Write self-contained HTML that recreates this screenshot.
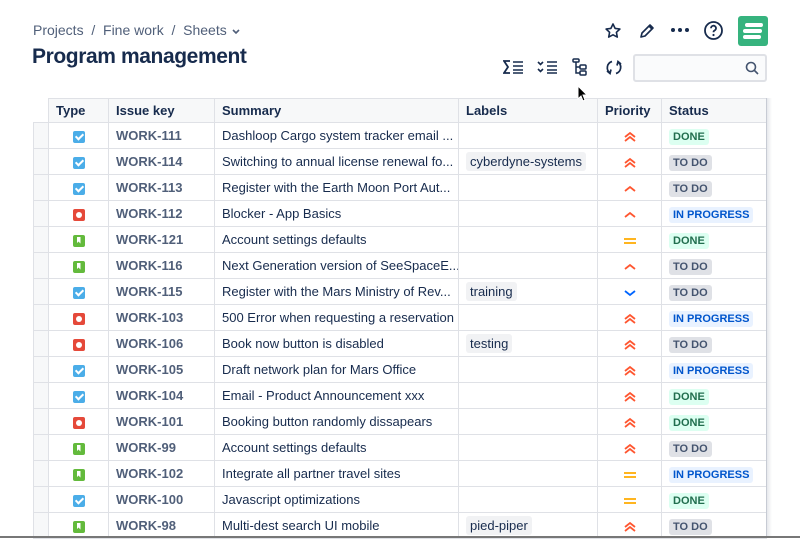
<!DOCTYPE html>
<html><head><meta charset="utf-8"><style>
*{box-sizing:border-box;margin:0;padding:0}
body{width:800px;height:538px;overflow:hidden;background:#fff;font-family:"Liberation Sans",sans-serif;color:#172b4d;position:relative}
.a{position:absolute}
.bc{left:33px;top:22px;font-size:14px;color:#505f79}
.h1{left:32px;top:45px;font-size:21px;font-weight:bold;color:#172b4d;letter-spacing:-0.4px}
table{position:absolute;left:33px;top:98px;border-collapse:collapse;font-size:13px;table-layout:fixed;width:733px}
td,th{border:1px solid #dfe1e6;height:26px;padding:0 7px;white-space:nowrap;overflow:hidden}
th{text-align:left;font-weight:bold;background:#f7f8f9;height:24px;color:#172b4d}
td.h{background:#f7f8f9;padding:0}
th.h{background:#fff;border:none;border-bottom:1px solid #dfe1e6;padding:0}
td.k{color:#505f79;font-weight:bold}
td.c{text-align:center}
.ic{display:inline-block;width:12px;height:12px;border-radius:2px;vertical-align:middle;position:relative}
.t{background:#4bade8}.t:after{content:"";position:absolute;left:4px;top:1px;width:3px;height:6px;border:solid #fff;border-width:0 2px 2px 0;transform:rotate(45deg)}
.b{background:#e5493a}.b:after{content:"";position:absolute;left:3px;top:3px;width:6px;height:6px;border-radius:50%;background:#fff}
.s{background:#63ba3c}.s:after{content:"";position:absolute;left:4px;top:2px;width:4px;height:7px;background:#fff;clip-path:polygon(0 0,100% 0,100% 100%,50% 70%,0 100%)}
.lz{background:#f1f2f4;border-radius:3px;padding:2px 4px;color:#172b4d}
.st{font-size:11px;font-weight:bold;padding:2px 4px;border-radius:3px}
.dn{background:#dcfff1;color:#216e4e}.td{background:#dfe1e6;color:#44546f}.ip{background:#e9f2ff;color:#0055cc}
svg{vertical-align:middle}
</style></head><body>
<svg width="0" height="0" style="position:absolute"><defs>
<symbol id="hh" viewBox="0 0 14 12"><path d="M2 6l5-4 5 4M2 10l5-4 5 4" fill="none" stroke="#ff5630" stroke-width="1.8"/></symbol>
<symbol id="hi" viewBox="0 0 14 12"><path d="M2 8l5-4 5 4" fill="none" stroke="#ff5630" stroke-width="1.8"/></symbol>
<symbol id="md" viewBox="0 0 14 12"><path d="M1 4h12M1 8h12" stroke="#ffab00" stroke-width="1.8"/></symbol>
<symbol id="lo" viewBox="0 0 14 12"><path d="M2 4l5 4 5-4" fill="none" stroke="#0065ff" stroke-width="1.8"/></symbol>
</defs></svg>
<div class="a bc">Projects &nbsp;/&nbsp; Fine work &nbsp;/&nbsp; Sheets <svg width="10" height="10" viewBox="0 0 10 10"><path d="M2 4l3 3 3-3" stroke="#505f79" stroke-width="1.6" fill="none"/></svg></div>
<div class="a h1">Program management</div>
<svg class="a" style="left:604px;top:22px" width="18" height="18" viewBox="0 0 18 18"><path d="M9 2l2.1 4.4 4.8.6-3.5 3.3.9 4.8L9 12.8 4.7 15.1l.9-4.8L2.1 7l4.8-.6z" fill="none" stroke="#172b4d" stroke-width="1.6" stroke-linejoin="round"/></svg>
<svg class="a" style="left:638px;top:22px" width="18" height="18" viewBox="0 0 18 18"><path d="M3 15l1-4 8-8 3 3-8 8z M11 4l3 3" fill="none" stroke="#172b4d" stroke-width="1.6" stroke-linejoin="round"/></svg>
<svg class="a" style="left:670px;top:26px" width="20" height="8"><circle cx="3" cy="4" r="2" fill="#172b4d"/><circle cx="10" cy="4" r="2" fill="#172b4d"/><circle cx="17" cy="4" r="2" fill="#172b4d"/></svg>
<svg class="a" style="left:703px;top:20px" width="21" height="21" viewBox="0 0 21 21"><circle cx="10.5" cy="10.5" r="8.5" fill="none" stroke="#172b4d" stroke-width="1.8"/><path d="M8 8.2a2.5 2.5 0 1 1 3.5 2.3c-.8.4-1 .9-1 1.8" fill="none" stroke="#172b4d" stroke-width="1.8"/><circle cx="10.5" cy="15" r="1.1" fill="#172b4d"/></svg>
<div class="a" style="left:738px;top:16px;width:30px;height:30px;background:#36b37e;border-radius:3px"><svg width="30" height="30"><path d="M9 9h14M7 15h15M7 21h14" stroke="#fff" stroke-width="4" stroke-linecap="round"/></svg></div>
<svg class="a" style="left:503px;top:59px" width="22" height="16"><path d="M7 2H1l4 6-4 6h6" fill="none" stroke="#172b4d" stroke-width="1.8"/><path d="M10 3h10M10 7h10M10 11h10M10 14h10" stroke="#172b4d" stroke-width="1.5"/></svg>
<svg class="a" style="left:537px;top:59px" width="22" height="16"><path d="M1 3l2.5 2.5L6 3M1 10l2.5 2.5L6 10" fill="none" stroke="#172b4d" stroke-width="1.6"/><path d="M10 3h10M10 7h10M10 11h10M10 14h10" stroke="#172b4d" stroke-width="1.5"/></svg>
<svg class="a" style="left:572px;top:58px" width="16" height="18"><rect x="1" y="1" width="6" height="3" rx="1" fill="none" stroke="#172b4d" stroke-width="1.5"/><path d="M4 4v11h4M4 9h4" fill="none" stroke="#172b4d" stroke-width="1.5"/><rect x="8" y="7" width="6" height="4" rx="1" fill="none" stroke="#172b4d" stroke-width="1.5"/><rect x="8" y="13" width="6" height="4" rx="1" fill="none" stroke="#172b4d" stroke-width="1.5"/></svg>
<svg class="a" style="left:605px;top:59px" width="18" height="17"><path d="M7 2.5A6.5 6.5 0 0 0 5 14M11 14.5A6.5 6.5 0 0 0 13 3M2 12l3 2.5 1-4M16 5l-3-2.5-1 4" fill="none" stroke="#172b4d" stroke-width="1.7"/></svg>
<div class="a" style="left:633px;top:54px;width:134px;height:28px;border:2px solid #dfe1e6;border-radius:3px;background:#fafbfc"><svg style="position:absolute;right:6px;top:5px" width="14" height="14"><circle cx="6" cy="6" r="4.5" fill="none" stroke="#44546f" stroke-width="1.6"/><path d="M9.5 9.5l3.5 3.5" stroke="#44546f" stroke-width="1.6"/></svg></div>
<table>
<colgroup><col style="width:15px"><col style="width:60px"><col style="width:106px"><col style="width:244px"><col style="width:139px"><col style="width:64px"><col style="width:105px"></colgroup>
<tr><th class="h"></th><th>Type</th><th>Issue key</th><th>Summary</th><th>Labels</th><th>Priority</th><th>Status</th></tr>
<tr><td class="h"></td><td class="c"><i class="ic t"></i></td><td class="k">WORK-111</td><td>Dashloop Cargo system tracker email ...</td><td></td><td class="c"><svg width="14" height="12"><use href="#hh"/></svg></td><td><span class="st dn">DONE</span></td></tr>
<tr><td class="h"></td><td class="c"><i class="ic t"></i></td><td class="k">WORK-114</td><td>Switching to annual license renewal fo...</td><td><span class="lz">cyberdyne-systems</span></td><td class="c"><svg width="14" height="12"><use href="#hh"/></svg></td><td><span class="st td">TO DO</span></td></tr>
<tr><td class="h"></td><td class="c"><i class="ic t"></i></td><td class="k">WORK-113</td><td>Register with the Earth Moon Port Aut...</td><td></td><td class="c"><svg width="14" height="12"><use href="#hi"/></svg></td><td><span class="st td">TO DO</span></td></tr>
<tr><td class="h"></td><td class="c"><i class="ic b"></i></td><td class="k">WORK-112</td><td>Blocker - App Basics</td><td></td><td class="c"><svg width="14" height="12"><use href="#hi"/></svg></td><td><span class="st ip">IN PROGRESS</span></td></tr>
<tr><td class="h"></td><td class="c"><i class="ic s"></i></td><td class="k">WORK-121</td><td>Account settings defaults</td><td></td><td class="c"><svg width="14" height="12"><use href="#md"/></svg></td><td><span class="st dn">DONE</span></td></tr>
<tr><td class="h"></td><td class="c"><i class="ic s"></i></td><td class="k">WORK-116</td><td>Next Generation version of SeeSpaceE...</td><td></td><td class="c"><svg width="14" height="12"><use href="#hi"/></svg></td><td><span class="st td">TO DO</span></td></tr>
<tr><td class="h"></td><td class="c"><i class="ic t"></i></td><td class="k">WORK-115</td><td>Register with the Mars Ministry of Rev...</td><td><span class="lz">training</span></td><td class="c"><svg width="14" height="12"><use href="#lo"/></svg></td><td><span class="st td">TO DO</span></td></tr>
<tr><td class="h"></td><td class="c"><i class="ic b"></i></td><td class="k">WORK-103</td><td>500 Error when requesting a reservation</td><td></td><td class="c"><svg width="14" height="12"><use href="#hh"/></svg></td><td><span class="st ip">IN PROGRESS</span></td></tr>
<tr><td class="h"></td><td class="c"><i class="ic b"></i></td><td class="k">WORK-106</td><td>Book now button is disabled</td><td><span class="lz">testing</span></td><td class="c"><svg width="14" height="12"><use href="#hh"/></svg></td><td><span class="st td">TO DO</span></td></tr>
<tr><td class="h"></td><td class="c"><i class="ic t"></i></td><td class="k">WORK-105</td><td>Draft network plan for Mars Office</td><td></td><td class="c"><svg width="14" height="12"><use href="#hh"/></svg></td><td><span class="st ip">IN PROGRESS</span></td></tr>
<tr><td class="h"></td><td class="c"><i class="ic t"></i></td><td class="k">WORK-104</td><td>Email - Product Announcement xxx</td><td></td><td class="c"><svg width="14" height="12"><use href="#hh"/></svg></td><td><span class="st dn">DONE</span></td></tr>
<tr><td class="h"></td><td class="c"><i class="ic b"></i></td><td class="k">WORK-101</td><td>Booking button randomly dissapears</td><td></td><td class="c"><svg width="14" height="12"><use href="#hh"/></svg></td><td><span class="st dn">DONE</span></td></tr>
<tr><td class="h"></td><td class="c"><i class="ic s"></i></td><td class="k">WORK-99</td><td>Account settings defaults</td><td></td><td class="c"><svg width="14" height="12"><use href="#hh"/></svg></td><td><span class="st td">TO DO</span></td></tr>
<tr><td class="h"></td><td class="c"><i class="ic s"></i></td><td class="k">WORK-102</td><td>Integrate all partner travel sites</td><td></td><td class="c"><svg width="14" height="12"><use href="#md"/></svg></td><td><span class="st ip">IN PROGRESS</span></td></tr>
<tr><td class="h"></td><td class="c"><i class="ic t"></i></td><td class="k">WORK-100</td><td>Javascript optimizations</td><td></td><td class="c"><svg width="14" height="12"><use href="#md"/></svg></td><td><span class="st dn">DONE</span></td></tr>
<tr><td class="h"></td><td class="c"><i class="ic s"></i></td><td class="k">WORK-98</td><td>Multi-dest search UI mobile</td><td><span class="lz">pied-piper</span></td><td class="c"><svg width="14" height="12"><use href="#hh"/></svg></td><td><span class="st td">TO DO</span></td></tr>
</table>
<div class="a" style="left:766px;top:98px;width:6px;height:440px;background:linear-gradient(to right,rgba(9,30,66,.12),rgba(9,30,66,0))"></div>
<svg class="a" style="left:577px;top:85px" width="12" height="17"><path d="M1 1v13l3-3 2 5 2-1-2-5h4z" fill="#000" stroke="#fff" stroke-width="1"/></svg>
<div class="a" style="left:0;top:536px;width:800px;height:2px;background:#777"></div>
</body></html>
